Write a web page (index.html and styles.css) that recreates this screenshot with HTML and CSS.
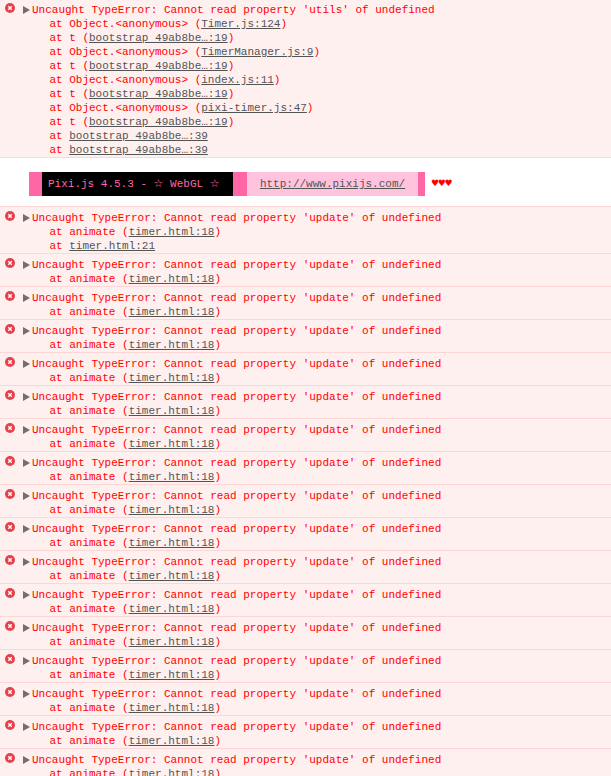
FILE: index.html
```html
<!DOCTYPE html>
<html lang="en">
<head>
<meta charset="utf-8">
<title>Console</title>
<link rel="stylesheet" href="styles.css">
</head>
<body>
<svg class="defs" width="0" height="0" aria-hidden="true"><symbol id="err" viewBox="0 0 11 11"><circle cx="5.5" cy="5.5" r="5.5" fill="#e5414a"/><path d="M3.6 3.6l3.8 3.8M7.4 3.6l-3.8 3.8" stroke="#fff" stroke-width="1.5" fill="none"/></symbol></svg>
<div class="console">
<div class="row first"><svg class="icon"><use href="#err"/></svg><pre class="msg"><i class="tri"></i>Uncaught TypeError: Cannot read property 'utils' of undefined
    at Object.&lt;anonymous&gt; (<a>Timer.js:124</a>)
    at t (<a>bootstrap 49ab8be…:19</a>)
    at Object.&lt;anonymous&gt; (<a>TimerManager.js:9</a>)
    at t (<a>bootstrap 49ab8be…:19</a>)
    at Object.&lt;anonymous&gt; (<a>index.js:11</a>)
    at t (<a>bootstrap 49ab8be…:19</a>)
    at Object.&lt;anonymous&gt; (<a>pixi-timer.js:47</a>)
    at t (<a>bootstrap 49ab8be…:19</a>)
    at <a>bootstrap 49ab8be…:39</a>
    at <a>bootstrap 49ab8be…:39</a></pre></div>
<div class="banner-row"><div class="banner"><span class="seg-pink-a"></span><span class="seg-black">Pixi.js 4.5.3 - ☆ WebGL ☆</span><span class="seg-pink-b"></span><span class="seg-light"><a>http://www.pixijs.com/</a></span><span class="seg-pink-c"></span></div><span class="hearts">♥♥♥</span></div>
<div class="row"><svg class="icon"><use href="#err"/></svg><pre class="msg"><i class="tri"></i>Uncaught TypeError: Cannot read property 'update' of undefined
    at animate (<a>timer.html:18</a>)
    at <a>timer.html:21</a></pre></div>
<div class="row"><svg class="icon"><use href="#err"/></svg><pre class="msg"><i class="tri"></i>Uncaught TypeError: Cannot read property 'update' of undefined
    at animate (<a>timer.html:18</a>)</pre></div>
<div class="row"><svg class="icon"><use href="#err"/></svg><pre class="msg"><i class="tri"></i>Uncaught TypeError: Cannot read property 'update' of undefined
    at animate (<a>timer.html:18</a>)</pre></div>
<div class="row"><svg class="icon"><use href="#err"/></svg><pre class="msg"><i class="tri"></i>Uncaught TypeError: Cannot read property 'update' of undefined
    at animate (<a>timer.html:18</a>)</pre></div>
<div class="row"><svg class="icon"><use href="#err"/></svg><pre class="msg"><i class="tri"></i>Uncaught TypeError: Cannot read property 'update' of undefined
    at animate (<a>timer.html:18</a>)</pre></div>
<div class="row"><svg class="icon"><use href="#err"/></svg><pre class="msg"><i class="tri"></i>Uncaught TypeError: Cannot read property 'update' of undefined
    at animate (<a>timer.html:18</a>)</pre></div>
<div class="row"><svg class="icon"><use href="#err"/></svg><pre class="msg"><i class="tri"></i>Uncaught TypeError: Cannot read property 'update' of undefined
    at animate (<a>timer.html:18</a>)</pre></div>
<div class="row"><svg class="icon"><use href="#err"/></svg><pre class="msg"><i class="tri"></i>Uncaught TypeError: Cannot read property 'update' of undefined
    at animate (<a>timer.html:18</a>)</pre></div>
<div class="row"><svg class="icon"><use href="#err"/></svg><pre class="msg"><i class="tri"></i>Uncaught TypeError: Cannot read property 'update' of undefined
    at animate (<a>timer.html:18</a>)</pre></div>
<div class="row"><svg class="icon"><use href="#err"/></svg><pre class="msg"><i class="tri"></i>Uncaught TypeError: Cannot read property 'update' of undefined
    at animate (<a>timer.html:18</a>)</pre></div>
<div class="row"><svg class="icon"><use href="#err"/></svg><pre class="msg"><i class="tri"></i>Uncaught TypeError: Cannot read property 'update' of undefined
    at animate (<a>timer.html:18</a>)</pre></div>
<div class="row"><svg class="icon"><use href="#err"/></svg><pre class="msg"><i class="tri"></i>Uncaught TypeError: Cannot read property 'update' of undefined
    at animate (<a>timer.html:18</a>)</pre></div>
<div class="row"><svg class="icon"><use href="#err"/></svg><pre class="msg"><i class="tri"></i>Uncaught TypeError: Cannot read property 'update' of undefined
    at animate (<a>timer.html:18</a>)</pre></div>
<div class="row"><svg class="icon"><use href="#err"/></svg><pre class="msg"><i class="tri"></i>Uncaught TypeError: Cannot read property 'update' of undefined
    at animate (<a>timer.html:18</a>)</pre></div>
<div class="row"><svg class="icon"><use href="#err"/></svg><pre class="msg"><i class="tri"></i>Uncaught TypeError: Cannot read property 'update' of undefined
    at animate (<a>timer.html:18</a>)</pre></div>
<div class="row"><svg class="icon"><use href="#err"/></svg><pre class="msg"><i class="tri"></i>Uncaught TypeError: Cannot read property 'update' of undefined
    at animate (<a>timer.html:18</a>)</pre></div>
<div class="row"><svg class="icon"><use href="#err"/></svg><pre class="msg"><i class="tri"></i>Uncaught TypeError: Cannot read property 'update' of undefined
    at animate (<a>timer.html:18</a>)</pre></div>
</div>
</body>
</html>
```
FILE: styles.css
```css
html, body {
  margin: 0;
  height: 776px;
  overflow: hidden;
  background: #fff;
}
.defs {
  display: block;
}
.console {
  font-family: "Liberation Mono", "DejaVu Sans", monospace;
  font-size: 11px;
  line-height: 14px;
}
.row {
  display: flex;
  align-items: flex-start;
  padding: 4px 0 0 5px;
  background: #fff0f0;
  border-bottom: 1px solid #ffd6d6;
}
.row.first {
  padding-top: 3px;
}
.icon {
  width: 10px;
  height: 10px;
  flex: none;
}
.msg {
  margin: 0 0 0 8px;
  font: inherit;
  color: #f00;
  white-space: pre;
}
.msg a {
  color: #545454;
  text-decoration: underline;
}
.tri {
  display: inline-block;
  width: 0;
  height: 0;
  margin-right: 2px;
  border-left: 7px solid #707070;
  border-top: 4px solid transparent;
  border-bottom: 4px solid transparent;
  vertical-align: -1px;
}
.banner-row {
  display: flex;
  align-items: flex-start;
  box-sizing: border-box;
  height: 49px;
  padding: 14px 0 0 29px;
  background: #fff;
  border-bottom: 1px solid #ffd6d6;
}
.banner {
  display: flex;
  height: 24px;
  line-height: 24px;
}
.seg-pink-a { width: 13px; background: #ff66a5; }
.seg-pink-b { width: 14px; background: #ff66a5; }
.seg-pink-c { width: 7px; background: #ff66a5; }
.seg-black {
  width: 185px;
  padding-left: 6px;
  background: #000;
  color: #ff66a5;
  white-space: pre;
}
.seg-light {
  width: 171px;
  text-align: center;
  background: #ffc3dd;
}
.seg-light a {
  color: #545454;
  text-decoration: underline;
}
.hearts {
  margin-left: 6px;
  color: #f00;
  font-family: "DejaVu Sans", sans-serif;
  font-size: 9px;
  line-height: 22px;
  letter-spacing: -1.3px;
}
```
